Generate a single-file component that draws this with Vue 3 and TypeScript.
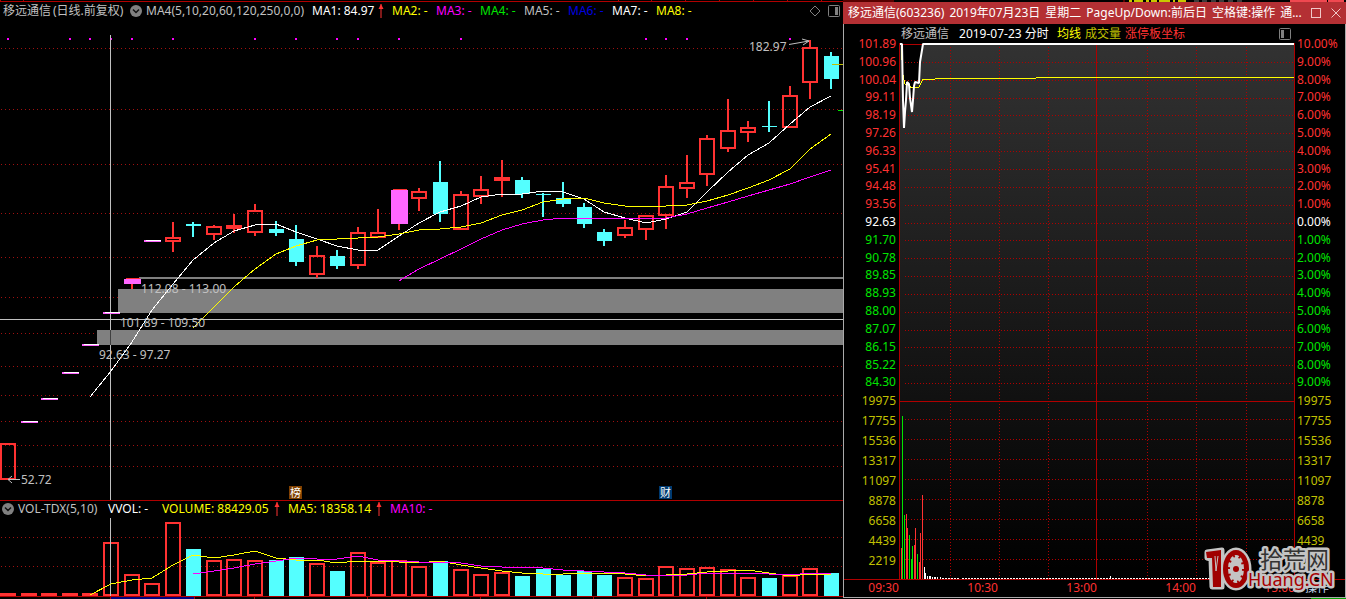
<script setup lang="ts">
type Kind = 'up' | 'down' | 'limit' | 'flat'
type Candle = [Kind, number, number, number, number]

const chartGrid = [48, 109, 164, 213, 257, 297, 333, 366, 395, 421, 445, 466]
const signals = [8, 70, 90, 111, 132, 173, 255, 296, 337, 358, 399, 461, 646, 666, 687, 790]

// kind, high, body top, body bottom, low
const candles: Candle[] = [
  ['up', 443, 443, 480, 480], ['flat', 421, 421, 423, 423], ['flat', 398, 398, 400, 400],
  ['flat', 372, 372, 374, 374], ['flat', 344, 344, 346, 346], ['flat', 312, 312, 314, 314],
  ['limit', 278, 279, 284, 289], ['flat', 240, 240, 242, 242], ['up', 222, 237, 242, 252],
  ['down', 222, 224, 226, 237], ['up', 225, 226, 235, 240], ['up', 214, 225, 229, 233],
  ['up', 204, 210, 233, 236], ['down', 221, 229, 233, 236], ['down', 225, 239, 262, 266],
  ['up', 246, 255, 275, 278], ['down', 250, 256, 266, 269], ['up', 227, 232, 266, 269],
  ['up', 209, 232, 238, 238], ['limit', 189, 190, 224, 230], ['up', 188, 191, 199, 211],
  ['down', 161, 182, 214, 222], ['up', 191, 194, 230, 230], ['up', 176, 189, 197, 204],
  ['up', 160, 177, 181, 197], ['down', 177, 180, 194, 198], ['down', 193, 194, 195, 217],
  ['down', 182, 198, 204, 207], ['down', 203, 207, 224, 228], ['down', 229, 232, 241, 246],
  ['up', 220, 227, 236, 238], ['up', 215, 215, 230, 240], ['up', 175, 186, 216, 229],
  ['up', 155, 182, 189, 198], ['up', 135, 138, 175, 186], ['up', 99, 130, 149, 152],
  ['up', 121, 127, 133, 142], ['down', 101, 126, 127, 132], ['up', 86, 95, 128, 128],
  ['up', 40, 47, 83, 99], ['down', 52, 56, 79, 89],
]
const volumeTops = [
  593, 593, 593, 593, 593, 542, 574, 583, 522, 549, 560, 559, 560, 560, 557, 563, 571, 552, 562, 560,
  566, 561, 569, 574, 572, 576, 569, 575, 571, 575, 577, 578, 566, 568, 567, 569, 577, 578, 575, 568, 573,
]
const centre = (i: number): number => Math.floor(8.75 + 20.56 * i)

const bars = candles.map(([kind, high, top, bottom, low], i) => ({
  kind, high, top, bottom, low, x: centre(i), vol: volumeTops[i],
}))

const line = (start: number, values: number[]): string =>
  values.map((v, i) => `${centre(start + i)},${v}`).join(' ')

const ma5 = line(4, [397, 371, 342, 310, 284, 260, 243, 231, 225, 224, 232, 239, 246, 250, 250, 236, 223, 212, 206, 197, 194, 194, 191, 192, 199, 212, 218, 223, 219, 212, 192, 172, 155, 143, 124, 107, 96])
const ma10 = line(9, [328, 307, 287, 269, 254, 246, 240, 239, 238, 237, 234, 230, 229, 227, 223, 215, 210, 202, 199, 198, 203, 206, 207, 206, 205, 201, 195, 188, 180, 169, 149, 134])
const ma20 = line(19, [281, 269, 259, 249, 239, 230, 224, 220, 218, 218, 218, 218, 219, 218, 214, 208, 202, 196, 190, 184, 177, 170])
const vol5 = line(4, [595, 584, 580, 578, 565, 555, 558, 555, 551, 558, 560, 560, 563, 561, 561, 562, 563, 561, 565, 568, 571, 573, 574, 574, 573, 573, 574, 576, 575, 574, 572, 571, 570, 573, 576, 574, 575])
const vol10 = line(9, [574, 571, 568, 564, 561, 558, 559, 559, 556, 560, 561, 562, 562, 563, 566, 567, 567, 568, 570, 571, 572, 573, 575, 575, 575, 573, 573, 573, 574, 575, 573, 573])

const averages = [
  { label: 'MA2: -', tone: 'yellow' }, { label: 'MA3: -', tone: 'magenta' },
  { label: 'MA4: -', tone: 'green' }, { label: 'MA5: -', tone: 'grey' },
  { label: 'MA6: -', tone: 'blue' }, { label: 'MA7: -', tone: 'white' },
  { label: 'MA8: -', tone: 'yellow' },
]

const caption = ['移远通信(603236)', '2019年07月23日', '星期二', 'PageUp/Down:前后日', '空格键:操作', '通...']
const prices = ['101.89', '100.96', '100.04', '99.11', '98.19', '97.26', '96.33', '95.41', '94.48', '93.56', '92.63', '91.70', '90.78', '89.85', '88.93', '88.00', '87.07', '86.15', '85.22', '84.30']
const percents = prices.map((_, i) => `${Math.abs(10 - i)}.00%`)
const volumes = ['19975', '17755', '15536', '13317', '11097', '8878', '6658', '4439', '2219']
const tone = (i: number): string => (i < 10 ? 'red' : i === 10 ? 'white' : 'green')

const priceGrid = Array.from({ length: 19 }, (_, i) => Math.round(44 + 17.85 * (i + 1)))
const volumeGrid = Array.from({ length: 8 }, (_, i) => 419 + 20 * i)
const timeGrid = [950, 999, 1048, 1147, 1196, 1246]
const times = ['10:30', '13:00', '14:00', '15:00']

const ticks: [number, number, string][] = [
  [901, 548, 'red'], [902, 416, 'green'], [904, 515, 'green'], [906, 514, 'red'], [907, 528, 'red'],
  [909, 535, 'green'], [911, 559, 'green'], [912, 546, 'green'], [914, 545, 'red'], [915, 528, 'red'],
  [917, 554, 'green'], [919, 562, 'red'], [920, 533, 'red'], [922, 495, 'red'], [924, 567, 'white'],
  [925, 573, 'white'], [927, 576, 'white'], [929, 576, 'white'], [930, 576, 'white'], [932, 577, 'white'],
  [934, 577, 'white'], [935, 577, 'white'], [937, 577, 'white'], [940, 577, 'white'], [1110, 576, 'white'],
]
const intraday = '900,44 902,44 903,100 904,128 905,112 906,100 907,82 909,84 910,98 912,112 913,100 914,86 915,82 919,83 920,62 922,50 923,44 1294,44'
const average = '901,46 902,60 903,75 905,84 908,85 912,88 919,87 923,79 935,79 936,78 1036,78 1037,77 1294,77'
</script>

<template>
  <main class="terminal">
    <section class="daily">
      <svg class="strip" viewBox="0 0 843 2" preserveAspectRatio="none" aria-hidden="true">
        <path d="M0 1.5H843M.5 0V2M23.5 0V2M618.5 0V2M651.5 0V2M685.5 0V2M719.5 0V2M753.5 0V2M787.5 0V2M821.5 0V2" stroke="#b00000" />
      </svg>
      <header class="bar">
        <span class="grey stock">移远通信</span>
        <span class="grey period">(日线.前复权)</span>
        <button class="icon" type="button" aria-label="指标菜单">
          <svg viewBox="0 0 12 12"><circle cx="6" cy="6" r="6" fill="#808080" /><path d="M3 4.5L6 7.5L9 4.5" fill="none" stroke="#111" stroke-width="1.5" /></svg>
        </button>
        <span class="grey params">MA4(5,10,20,60,120,250,0,0)</span>
        <span class="white first">MA1: 84.97</span>
        <svg class="arrow" viewBox="0 0 6 14"><path d="M3 0V14" stroke="#ff3232" /><path d="M3 0L5.5 5H.5Z" fill="#ff3232" /></svg>
        <span v-for="m in averages" :key="m.label" class="average" :class="m.tone">{{ m.label }}</span>
        <span class="tools">
          <button class="icon" type="button" aria-label="标记"><svg viewBox="0 0 12 12"><path d="M6 1L11 6L6 11L1 6Z" fill="none" stroke="#808080" /></svg></button>
          <button class="icon" type="button" aria-label="侧栏"><svg viewBox="0 0 12 12"><rect x=".5" y=".5" width="11" height="11" rx="1" fill="none" stroke="#808080" /><path d="M7 2H10V10H7Z" fill="#808080" /></svg></button>
        </span>
      </header>

      <svg class="candles" viewBox="0 22 843 478" preserveAspectRatio="none" role="img" aria-label="日线">
        <path v-for="y in chartGrid" :key="y" class="dots" :d="`M1 ${y + 0.5}H843`" />
        <rect v-for="x in signals" :key="x" :x="x - 1" y="38" width="2" height="2" fill="#f0f" />
        <g fill="#808080">
          <rect x="139" y="277" width="704" height="2" />
          <rect x="118" y="289" width="725" height="24" />
          <rect x="97" y="330" width="746" height="15" />
        </g>
        <path d="M0 319.5H843M110.5 35V500" stroke="#c0c0c0" />
        <path d="M110.5 330V345" stroke="#404040" />
        <g v-for="b in bars" :key="b.x">
          <template v-if="b.kind === 'up'">
            <rect :x="b.x - 7" :y="b.top + 1" width="14" :height="b.bottom - b.top - 2" class="hollow" />
            <rect :x="b.x - 1" :y="b.high" width="2" :height="b.top - b.high" fill="#ff3232" />
            <rect :x="b.x - 1" :y="b.bottom" width="2" :height="b.low - b.bottom" fill="#ff3232" />
          </template>
          <template v-else-if="b.kind === 'down'">
            <rect :x="b.x - 1" :y="b.high" width="2" :height="b.low - b.high" fill="#54ffff" />
            <rect :x="b.x - 7" :y="b.top" width="15" :height="b.bottom - b.top" fill="#54ffff" />
          </template>
          <template v-else-if="b.kind === 'limit'">
            <rect :x="b.x - 6" :y="b.top - 1" width="14" height="1" fill="#ff3232" />
            <rect :x="b.x - 1" :y="b.bottom" width="2" :height="b.low - b.bottom" fill="#ff3232" />
            <rect :x="b.x - 8" :y="b.top" width="17" :height="b.bottom - b.top" fill="#ff66ff" />
          </template>
          <template v-else>
            <rect :x="b.x - 8" :y="b.top" width="17" height="2" fill="#ff66ff" />
            <rect :x="b.x - 6" :y="b.top" width="15" height="1" fill="#fff" />
          </template>
        </g>
        <polyline :points="ma5" class="trace" stroke="#fff" />
        <polyline :points="ma10" class="trace" stroke="#ff0" />
        <polyline :points="ma20" class="trace" stroke="#f0f" />
        <g class="note">
          <text x="141" y="293">112.08 - 113.00</text>
          <text x="120" y="327">101.89 - 109.50</text>
          <text x="99" y="359">92.63 - 97.27</text>
          <text x="21" y="484">52.72</text>
          <text x="749" y="51">182.97</text>
        </g>
        <path d="M20 479.5H8M12 476L8 479.5L12 483M789 44.5L809 41M802 39L809 41L803 45" fill="none" stroke="#c0c0c0" />
        <path d="M832 64.5H843" stroke="#c0c000" />
        <path d="M838 110.5H843" stroke="#00e600" />
        <rect x="289" y="486" width="13" height="13" fill="#804000" />
        <rect x="659" y="486" width="13" height="13" fill="#003a70" />
        <g class="badge"><text x="290" y="497">榜</text><text x="660" y="497">财</text></g>
      </svg>

      <header class="bar volume-bar">
        <button class="icon" type="button" aria-label="成交量菜单">
          <svg viewBox="0 0 12 12"><circle cx="6" cy="6" r="6" fill="#808080" /><path d="M3 4.5L6 7.5L9 4.5" fill="none" stroke="#111" stroke-width="1.5" /></svg>
        </button>
        <span class="grey vol-name">VOL-TDX(5,10)</span>
        <span class="white vvol">VVOL: -</span>
        <span class="yellow total">VOLUME: 88429.05</span>
        <svg class="arrow" viewBox="0 0 6 14"><path d="M3 0V14" stroke="#ff3232" /><path d="M3 0L5.5 5H.5Z" fill="#ff3232" /></svg>
        <span class="yellow mean">MA5: 18358.14</span>
        <svg class="arrow" viewBox="0 0 6 14"><path d="M3 0V14" stroke="#ff3232" /><path d="M3 0L5.5 5H.5Z" fill="#ff3232" /></svg>
        <span class="magenta">MA10: -</span>
      </header>

      <svg class="volumes" viewBox="0 518 843 81" preserveAspectRatio="none" role="img" aria-label="成交量">
        <path class="dots" d="M1 537.5H843M1 566.5H843" />
        <g v-for="b in bars" :key="b.x">
          <rect v-if="b.kind === 'down'" :x="b.x - 7" :y="b.vol" width="15" :height="596 - b.vol" fill="#54ffff" />
          <rect v-else :x="b.x - 7" :y="b.vol + 1" width="14" :height="594 - b.vol" class="hollow" />
        </g>
        <path d="M110.5 518V596" stroke="#c0c0c0" />
        <polyline :points="vol5" class="trace" stroke="#ff0" />
        <polyline :points="vol10" class="trace" stroke="#f0f" />
        <path d="M0 596.5H843M110.5 597V599M194.5 597V599M254.5 597V599M367.5 597V599M480.5 597V599M593.5 597V599M706.5 597V599" stroke="#b00000" />
        <rect x="111" y="597" width="83" height="2" fill="#000080" />
      </svg>
    </section>

    <section class="intraday">
      <svg class="top-edge" viewBox="843 0 503 2" preserveAspectRatio="none" aria-hidden="true">
        <path d="M843 1H894M1124 0V2" stroke="#b00000" />
        <path d="M1129 1H1132M1134 1H1143M1146 1H1149M1151 1H1157M1159 1H1170M1173 1H1175M1178 1H1186" stroke="#c8c800" stroke-width="2" />
        <path d="M1194 1H1199M1202 1H1207M1211 1H1216M1219 1H1224M1228 1H1233M1237 1H1242" stroke="#777" />
        <path d="M1290 1H1327M1328 1H1344" stroke="#f04850" stroke-width="2" />
      </svg>
      <div class="window">
        <header class="title">
          <span class="caption"><span v-for="c in caption" :key="c">{{ c }}</span></span>
          <button class="icon" type="button" aria-label="最大化"><svg viewBox="0 0 12 12"><rect x="1.5" y="1.5" width="9" height="9" fill="none" stroke="#f0c8c8" /></svg></button>
          <button class="icon" type="button" aria-label="关闭"><svg viewBox="0 0 12 12"><path d="M1.5 1.5L10.5 10.5M10.5 1.5L1.5 10.5" stroke="#f0c8c8" /></svg></button>
        </header>
        <div class="body">
          <div class="axis left">
            <div class="group prices"><span v-for="(p, i) in prices" :key="p" :class="tone(i)">{{ p }}</span></div>
            <div class="group amounts"><span v-for="v in volumes" :key="v" class="olive">{{ v }}</span></div>
          </div>
          <div class="plot">
            <header class="legend">
              <span class="grey name">移远通信</span>
              <span class="white date">2019-07-23 分时</span>
              <span class="yellow">均线</span>
              <span class="olive">成交量</span>
              <span class="red">涨停板坐标</span>
              <button class="icon" type="button" aria-label="侧栏"><svg viewBox="0 0 12 12"><rect x=".5" y=".5" width="11" height="11" rx="1" fill="none" stroke="#808080" /><path d="M2 2H5V10H2Z" fill="#808080" /></svg></button>
            </header>
            <svg class="graph" viewBox="899 43 396 536" preserveAspectRatio="none" role="img" aria-label="分时">
              <defs>
                <linearGradient id="shade" x1="0" y1="0" x2="0" y2="1"><stop offset="0" stop-color="#323232" /><stop offset="1" stop-color="#000" /></linearGradient>
              </defs>
              <rect x="900" y="44" width="394" height="535" fill="url(#shade)" />
              <polygon :points="intraday" fill="#000" />
              <path v-for="y in priceGrid" :key="y" class="grid-dots" :d="`M905 ${y + 0.5}H1294`" />
              <path v-for="y in volumeGrid" :key="y" class="grid-dots" :d="`M905 ${y + 0.5}H1294`" />
              <path v-for="x in timeGrid" :key="x" class="grid-dots" :d="`M${x + 0.5} 47V579`" />
              <path d="M899.5 43V579M1294.5 43V579M1096.5 44V579M899 401.5H1295M900 44.5H923" stroke="#b00000" />
              <rect v-for="[x, y, c] in ticks" :key="x" :class="c" :x="x" :y="y" width="1" :height="579 - y" fill="currentColor" />
              <path d="M942 578.5H959M962 578.5H1290" stroke="#fff" stroke-dasharray="2 1" />
              <polyline :points="average" class="trace" stroke="#ff0" />
              <polyline :points="intraday" fill="none" stroke="#fff" stroke-width="2" stroke-linejoin="bevel" />
            </svg>
          </div>
          <div class="axis right">
            <div class="group prices"><span v-for="(p, i) in percents" :key="i" :class="tone(i)">{{ p }}</span></div>
            <div class="group amounts"><span v-for="v in volumes" :key="v" class="olive">{{ v }}</span></div>
          </div>
        </div>
        <footer class="times red">
          <span class="open">09:30</span>
          <div class="hours"><span v-for="t in times" :key="t">{{ t }}</span></div>
          <span class="action">操作</span>
        </footer>
      </div>
      <div class="bottom-edge"></div>
      <svg class="mark" viewBox="0 0 132 48" role="img" aria-label="10 拾荒网 Huang.CN">
        <g stroke="#c4c4c4" stroke-width="5" stroke-linejoin="round" fill="#c4c4c4">
          <path d="M3 6L18 4V41H8L7 13L3 12Z" />
          <ellipse cx="32" cy="23" rx="13" ry="19" />
        </g>
        <path d="M2 6L17 4V41H9L8 12L3 12Z" fill="#a00000" />
        <path d="M11 10L12 25L14 10" fill="none" stroke="#c4c4c4" />
        <ellipse cx="32" cy="23" rx="13" ry="19" fill="#a00000" />
        <ellipse cx="32" cy="23" rx="8" ry="14" fill="#c4c4c4" />
        <ellipse cx="32" cy="23" rx="8" ry="14" fill="none" stroke="#a00000" stroke-width="4" stroke-dasharray="2 5" />
        <circle cx="32" cy="23" r="3" fill="#a00000" />
        <text x="56" y="22" class="mark-cn">拾荒网</text>
        <text x="44" y="40" class="mark-en">Huang.CN</text>
      </svg>
    </section>
  </main>
</template>

<style>
html, body { margin: 0; background: #000; }
</style>

<style scoped>
.terminal {
  display: grid;
  grid-template-columns: 843fr 503fr;
  min-height: 100vh;
  background: #000;
  font: 12px/16px "Noto Sans", "Noto Sans CJK SC", sans-serif;
  white-space: nowrap;
}
svg { display: block; }
button { padding: 0; border: 0; background: none; cursor: pointer; }
.grey { color: #c0c0c0; }
.white { color: #fff; }
.yellow { color: #ff0; }
.magenta { color: #f0f; }
.green { color: #00e600; }
.blue { color: #0000e0; }
.red { color: #ff3232; }
.olive { color: #c0c000; }
.icon { width: 12px; height: 12px; flex: none; }
.icon svg { width: 12px; height: 12px; }

.daily { display: flex; flex-direction: column; min-width: 0; }
.strip { width: 100%; height: 2px; flex: none; }
.bar { display: flex; align-items: center; flex: none; height: 20px; padding: 0 0 2px 3px; box-sizing: border-box; overflow: hidden; }
.bar span { flex: none; }
.stock { width: 50px; }
.period { width: 77px; }
.params { width: 166px; padding-left: 4px; box-sizing: border-box; }
.first { width: 66px; padding-left: 4px; }
.arrow { width: 6px; height: 14px; flex: none; margin-right: 8px; }
.average { width: 44px; }
.tools { display: flex; gap: 7px; margin-left: auto; padding-right: 3px; }
.candles { width: 100%; flex: 478 1 0; min-height: 0; }
.volume-bar { height: 18px; border-top: 1px solid #b00000; padding: 0 0 1px 2px; }
.vol-name { width: 94px; padding-left: 4px; box-sizing: border-box; }
.vvol { width: 54px; }
.total { width: 112px; }
.mean { width: 88px; }
.volumes { width: 100%; flex: 81 1 0; min-height: 0; }
.dots { stroke: #a01010; stroke-dasharray: 1 3; fill: none; }
.grid-dots { stroke: #b00000; stroke-dasharray: 1 2; fill: none; }
.hollow { fill: none; stroke: #ff3232; stroke-width: 2; }
.trace { fill: none; stroke-width: 1; shape-rendering: crispEdges; }
.note { fill: #c0c0c0; font-size: 12px; }
.badge { fill: #fff; font-size: 11px; }

.intraday { position: relative; display: flex; flex-direction: column; min-width: 0; }
.top-edge { width: 100%; height: 2px; flex: none; }
.window { flex: 1; display: flex; flex-direction: column; border: 1px solid #aaa; border-top: 0; }
.title { display: flex; align-items: center; height: 22px; margin: 0 -1px; padding: 0 4px 0 5px; background: #b43034; color: #fff; }
.caption { display: flex; gap: 5px; flex: 1; min-width: 0; overflow: hidden; }
.title .icon + .icon { margin-left: 8px; }
.body { flex: 1; display: grid; grid-template-columns: 55px 1fr 50px; border-bottom: 1px solid #b00000; }
.axis { display: flex; flex-direction: column; padding: 11px 3px 8px 2px; }
.left { text-align: right; }
.group { display: flex; flex-direction: column; }
.group span { flex: 1 1 0; display: flex; align-items: center; line-height: 16px; }
.left .group span { justify-content: flex-end; }
.prices { flex: 357 1 0; }
.amounts { flex: 180 1 0; }
.plot { display: flex; flex-direction: column; min-width: 0; }
.legend { display: flex; align-items: center; gap: 4px; height: 19px; padding: 0 4px 0 2px; }
.legend .name { margin-right: 6px; }
.legend .date { min-width: 94px; }
.legend .icon { margin-left: auto; }
.graph { width: 100%; flex: 1 1 0; min-height: 0; }
.times { display: grid; grid-template-columns: 55px 1fr 50px; height: 17px; line-height: 16px; text-align: right; }
.hours { display: grid; grid-template-columns: repeat(4, 1fr); }
.action { color: #c0d8f0; text-align: left; padding-left: 10px; }
.bottom-edge { height: 1px; width: 35px; margin-left: auto; background: #00a000; }
.mark { position: absolute; right: 10px; bottom: 5px; width: 132px; height: 48px; overflow: visible; }
.mark text { paint-order: stroke; stroke: #c4c4c4; stroke-width: 5px; stroke-linejoin: round; }
.mark-cn { font: 23px "Noto Sans CJK SC", sans-serif; fill: #333; }
.mark-en { font: 18px "Noto Sans", sans-serif; fill: #a80000; }
</style>
